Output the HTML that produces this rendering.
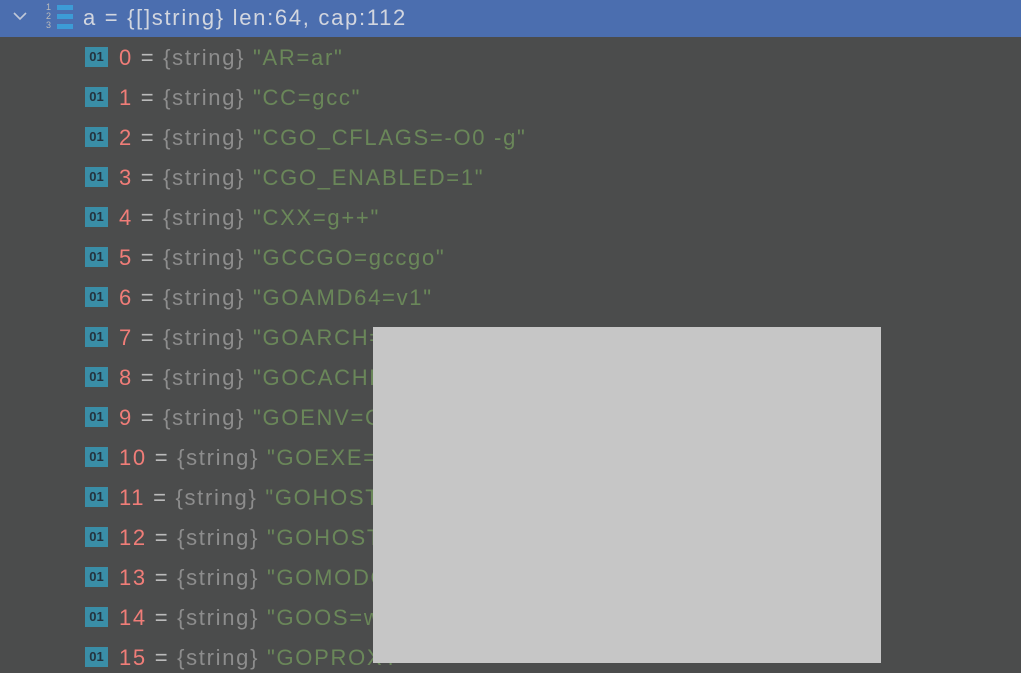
<!DOCTYPE html>
<html><head><meta charset="utf-8"><style>
body{margin:0;width:1021px;height:663px;overflow:hidden;background:#4b4c4c;font-family:"Segoe UI","Liberation Sans","DejaVu Sans",sans-serif;position:relative}
.hdr{position:absolute;left:0;top:0;width:1021px;height:37px;background:#4b6eaf}
.t{position:absolute;font-size:22px;white-space:nowrap;line-height:30px;letter-spacing:1.7px}
.ic{position:absolute;left:85px;width:23px;height:20px;background:#3a8ea7;color:#24333f;font-size:13px;font-weight:bold;text-align:center;line-height:20px;font-family:"Liberation Sans",sans-serif}
.r{color:#f07d78}.w{color:#bbbbbb}.g{color:#8d8d8d}.s{color:#6a8759}
.bar{position:absolute;left:57px;width:16px;height:5px;background:#3d9bd6}
.dg{position:absolute;left:46px;font-size:9px;color:#bbb;line-height:9px;font-family:"Liberation Sans",sans-serif}
</style></head><body>
<div class="hdr"></div>
<svg style="position:absolute;left:12px;top:10px" width="16" height="12"><path d="M2 3 L8 9 L14 3" fill="none" stroke="#c0c8d8" stroke-width="1.6"/></svg>
<div class="dg" style="top:3px">1</div><div class="dg" style="top:12px">2</div><div class="dg" style="top:21px">3</div>
<div class="bar" style="top:5px"></div><div class="bar" style="top:14px"></div><div class="bar" style="top:24px"></div>
<div class="t" style="left:83px;top:3px;color:#d2d6df">a = {[]string} len:64, cap:112</div>
<div id="rows"></div>
<script>
var v=["AR=ar","CC=gcc","CGO_CFLAGS=-O0 -g","CGO_ENABLED=1","CXX=g++","GCCGO=gccgo","GOAMD64=v1","GOARCH=amd64","GOCACHE=C","GOENV=C","GOEXE=.exe","GOHOSTARCH=amd64","GOHOSTOS=windows","GOMODCACHE=","GOOS=windows","GOPROXY="];
var h="";for(var i=0;i<16;i++){var y=43+i*40;h+='<div class="ic" style="top:'+(y+4)+'px">01</div><div class="t" style="left:119px;top:'+y+'px"><span class="r">'+i+'</span> <span class="w">=</span> <span class="g">{string}</span> <span class="s">"'+v[i]+'"</span></div>';}
document.getElementById("rows").innerHTML=h;
</script>
<div style="position:absolute;left:373px;top:327px;width:508px;height:336px;background:#c6c6c6"></div>
</body></html>
